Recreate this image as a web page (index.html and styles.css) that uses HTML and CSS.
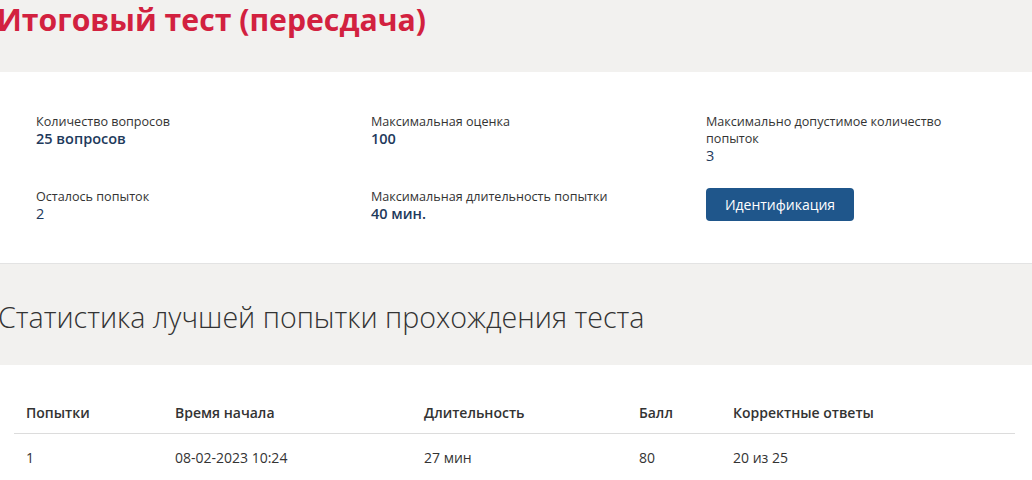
FILE: index.html
```html
<!DOCTYPE html>
<html lang="ru">
<head>
<meta charset="utf-8">
<title>Итоговый тест (пересдача)</title>
<link rel="stylesheet" href="styles.css">
</head>
<body>
<header class="top">
  <h1 class="title">Итоговый тест (пересдача)</h1>
</header>
<section class="info">
  <div class="grid">
    <div class="item">
      <div class="label">Количество вопросов</div>
      <div class="value">25 вопросов</div>
    </div>
    <div class="item">
      <div class="label">Максимальная оценка</div>
      <div class="value">100</div>
    </div>
    <div class="item">
      <div class="label">Максимально допустимое количество попыток</div>
      <div class="value plain">3</div>
    </div>
    <div class="item">
      <div class="label">Осталось попыток</div>
      <div class="value plain">2</div>
    </div>
    <div class="item">
      <div class="label">Максимальная длительность попытки</div>
      <div class="value">40 мин.</div>
    </div>
    <div class="item">
      <button class="btn" type="button">Идентификация</button>
    </div>
  </div>
</section>
<section class="band">
  <h2 class="subtitle">Статистика лучшей попытки прохождения теста</h2>
</section>
<section class="stats">
  <table class="table">
    <thead>
      <tr>
        <th class="c1">Попытки</th>
        <th class="c2">Время начала</th>
        <th class="c3">Длительность</th>
        <th class="c4">Балл</th>
        <th class="c5">Корректные ответы</th>
      </tr>
    </thead>
    <tbody>
      <tr>
        <td>1</td>
        <td>08-02-2023 10:24</td>
        <td>27 мин</td>
        <td>80</td>
        <td>20 из 25</td>
      </tr>
    </tbody>
  </table>
</section>
</body>
</html>
```

FILE: styles.css
```css
* { box-sizing: border-box; }
html, body { margin: 0; padding: 0; }
body {
  font-family: "Open Sans", "Noto Sans", sans-serif;
  color: #333;
  background: #fff;
  width: 1032px;
  overflow: hidden;
}
.top {
  background: #f2f1ef;
  height: 72px;
}
.title {
  margin: 0 0 0 -3px;
  font-family: "Open Sans", sans-serif;
  font-weight: 700;
  font-size: 30.2px;
  line-height: 40px;
  color: #d2213f;
  white-space: nowrap;
}
.info {
  background: #fff;
  height: 192px;
  padding: 41px 0 0 36px;
  border-bottom: 1px solid #e3e3e3;
}
.grid {
  display: grid;
  grid-template-columns: 335px 335px 300px;
  row-gap: 24px;
}
.label {
  font-size: 12.6px;
  line-height: 17px;
  color: #333;
  max-width: 250px;
}
.value {
  font-size: 14.5px;
  line-height: 17px;
  font-weight: 600;
  color: #1e3a5c;
}
.value.plain { font-weight: 500; }
.btn {
  font-family: "Open Sans", sans-serif;
  font-size: 14px;
  color: #fff;
  background: #1f568b;
  border: none;
  border-radius: 4px;
  width: 148px;
  height: 33px;
  padding: 0;
  cursor: pointer;
}
.band {
  background: #f2f1ef;
  height: 101px;
  display: flex;
  align-items: center;
}
.subtitle {
  margin: 0 0 -4px -2px;
  font-family: "Open Sans", sans-serif;
  font-stretch: 90%;
  font-weight: 300;
  font-size: 28.6px;
  line-height: 40px;
  color: #333;
  white-space: nowrap;
}
.stats {
  padding: 30px 17px 0 14px;
}
.table {
  width: 100%;
  border-collapse: collapse;
  font-size: 14px;
}
.table th {
  text-align: left;
  font-weight: 600;
  color: #333;
  padding: 8px 12px 10px;
  line-height: 20px;
  border-bottom: 1px solid #dcdcdc;
}
.table td {
  padding: 14px 12px;
  line-height: 20px;
  color: #333;
}
.c1 { width: 149px; }
.c2 { width: 249px; }
.c3 { width: 215px; }
.c4 { width: 94px; }
```
